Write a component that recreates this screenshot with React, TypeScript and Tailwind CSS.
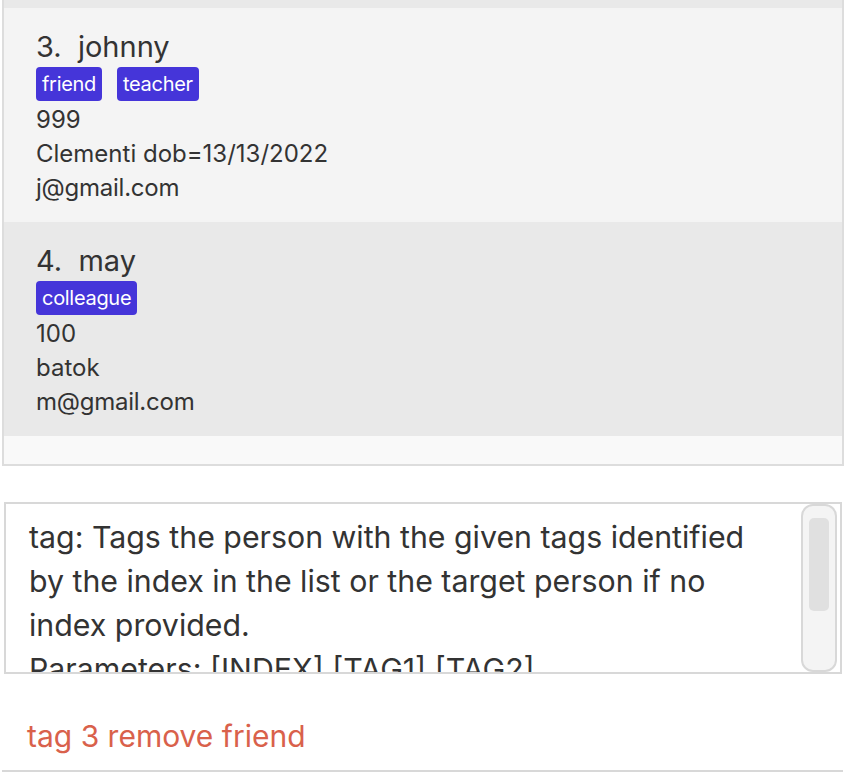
import React from 'react';

type Person = {
    index: number;
    name: string;
    tags: string[];
    phone: string;
    address: string;
    email: string;
};

const PEOPLE: Person[] = [
    { index: 3, name: 'johnny', tags: ['friend', 'teacher'], phone: '999', address: 'Clementi dob=13/13/2022', email: 'j@gmail.com' },
    { index: 4, name: 'may', tags: ['colleague'], phone: '100', address: 'batok', email: 'm@gmail.com' },
];

const RESULT_LINES = [
    'tag: Tags the person with the given tags identified',
    'by the index in the list or the target person if no',
    'index provided.',
    'Parameters: [INDEX] [TAG1] [TAG2]...',
];

const PersonCard = ({ person, odd }: { person: Person; odd: boolean }) => (
    <div className={`pl-[32px] pt-[20px] h-[214px] ${odd ? 'bg-[#f4f4f4]' : 'bg-[#e9e9e9]'}`}>
        <div className="text-[29px] leading-[38px] text-[#333333] whitespace-pre">
            {person.index}.  {person.name}
        </div>
        <div className="flex gap-[15px] mt-[1px]">
            {person.tags.map((tag) => (
                <span
                    key={tag}
                    className="h-[34px] px-[6px] rounded-[4px] bg-[#4535d9] text-white text-[20px] leading-[34px] tracking-[-0.015em]"
                >
                    {tag}
                </span>
            ))}
        </div>
        <div className="pt-[2px] text-[24px] leading-[34px] text-[#333333]">
            <div>{person.phone}</div>
            <div>{person.address}</div>
            <div className="tracking-[-0.01em]">{person.email}</div>
        </div>
    </div>
);

const App = () => {
    return (
        <div className="w-[856px] h-[782px] bg-white overflow-hidden font-['Inter',sans-serif]">
            {/* person list */}
            <div className="ml-[2px] mr-[12px] border-2 border-t-0 border-[#dddddd] bg-[#f9f9f9]">
                <div className="h-[8px] bg-[#e9e9e9]" />
                {PEOPLE.map((p, i) => (
                    <PersonCard key={p.index} person={p} odd={i % 2 === 0} />
                ))}
                <div className="h-[28px]" />
            </div>

            {/* result display */}
            <div className="mt-[36px] ml-[4px] mr-[14px] h-[172px] border-2 border-[#d8d8d8] bg-white flex overflow-hidden">
                <div className="flex-1 pl-[23px] pt-[11px] text-[30.3px] leading-[44px] text-[#333333] whitespace-nowrap overflow-hidden">
                    {RESULT_LINES.map((line) => (
                        <div key={line}>{line}</div>
                    ))}
                </div>
                <div className="w-[36px] mr-[3px] h-full rounded-[12px] border-2 border-[#d8d8d8] bg-[#f4f4f4] flex justify-center pt-[12px]">
                    <div className="w-[20px] h-[93px] rounded-[5px] bg-[#e0e0e0]" />
                </div>
            </div>

            {/* command box */}
            <div className="ml-[2px] w-[841px] h-[98px] border-b-2 border-[#d8d8d8] pl-[25px] pt-[40px]">
                <div className="text-[30px] leading-[44px] text-[#d9614b]">tag 3 remove friend</div>
            </div>
        </div>
    );
};

export default App;
